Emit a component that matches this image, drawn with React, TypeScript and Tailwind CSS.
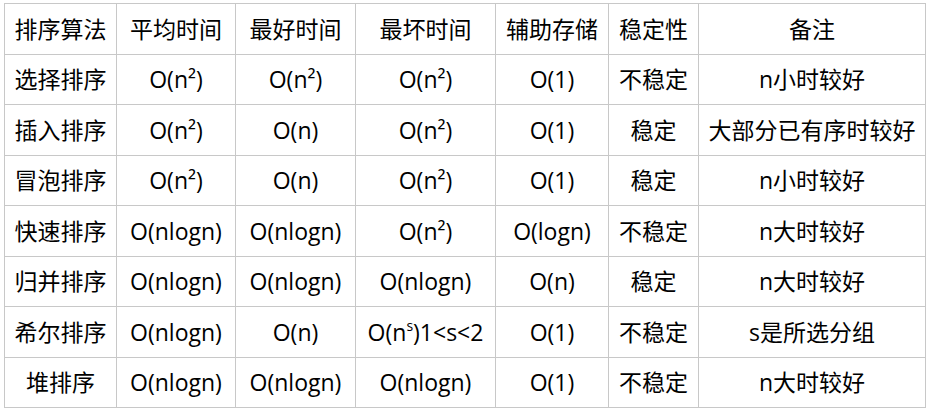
import React from 'react';

type Cell = React.ReactNode;

const header = ['排序算法', '平均时间', '最好时间', '最坏时间', '辅助存储', '稳定性', '备注'];

const rows: Cell[][] = [
  ['选择排序', 'O(n²)', 'O(n²)', 'O(n²)', 'O(1)', '不稳定', 'n小时较好'],
  ['插入排序', 'O(n²)', 'O(n)', 'O(n²)', 'O(1)', '稳定', '大部分已有序时较好'],
  ['冒泡排序', 'O(n²)', 'O(n)', 'O(n²)', 'O(1)', '稳定', 'n小时较好'],
  ['快速排序', 'O(nlogn)', 'O(nlogn)', 'O(n²)', 'O(logn)', '不稳定', 'n大时较好'],
  ['归并排序', 'O(nlogn)', 'O(nlogn)', 'O(nlogn)', 'O(n)', '稳定', 'n大时较好'],
  [
    '希尔排序',
    'O(nlogn)',
    'O(n)',
    <>O(n<sup className="text-[14px] relative -top-[1px] align-super leading-none">s</sup>)1&lt;s&lt;2</>,
    'O(1)',
    '不稳定',
    's是所选分组',
  ],
  ['堆排序', 'O(nlogn)', 'O(nlogn)', 'O(nlogn)', 'O(1)', '不稳定', 'n大时较好'],
];

const widths = ['w-[112px]', 'w-[119px]', 'w-[120px]', 'w-[140px]', 'w-[113px]', 'w-[90px]', 'w-[227px]'];

export default function App() {
  return (
    <div
      className="bg-white w-[932px] h-[412px] pl-[4px] pt-[3px] text-black text-[23px]"
      style={{ fontFamily: '"Open Sans", "Noto Sans CJK SC", sans-serif' }}
    >
      <table className="border-collapse table-fixed">
        <colgroup>
          {widths.map((w, i) => (
            <col key={i} className={w} />
          ))}
        </colgroup>
        <tbody>
          <tr className="h-[50.5px]">
            {header.map((h, i) => (
              <td key={i} className="border border-[#c8c8c8] text-center p-0 whitespace-nowrap">
                {h}
              </td>
            ))}
          </tr>
          {rows.map((r, ri) => (
            <tr key={ri} className="h-[50.5px]">
              {r.map((c, ci) => (
                <td key={ci} className="border border-[#c8c8c8] text-center p-0 whitespace-nowrap">
                  {c}
                </td>
              ))}
            </tr>
          ))}
        </tbody>
      </table>
    </div>
  );
}
